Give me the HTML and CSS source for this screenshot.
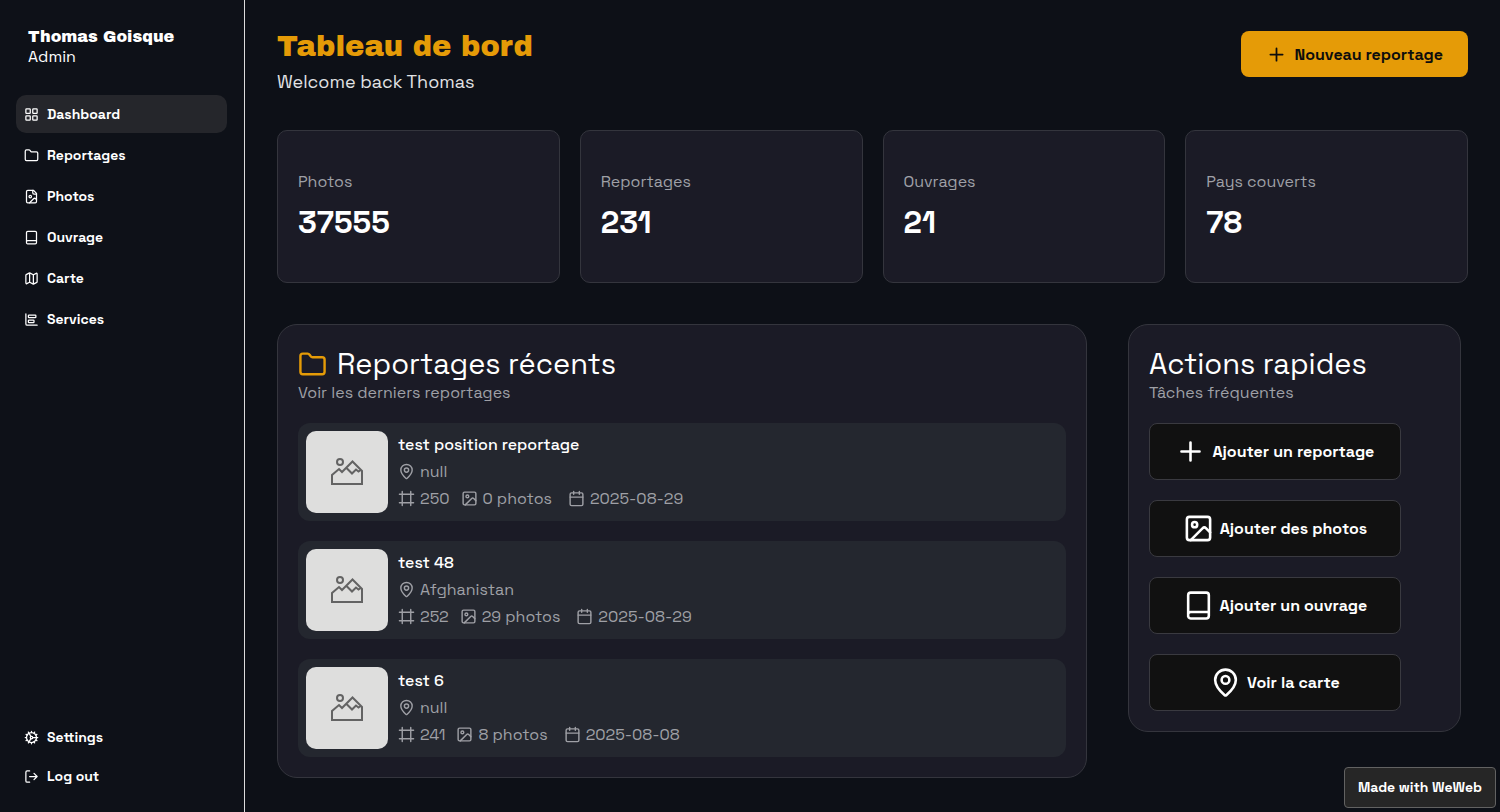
FILE: index.html
```html
<!DOCTYPE html>
<html lang="fr">
<head>
    <meta charset="utf-8">
    <meta name="viewport" content="width=device-width, initial-scale=1">
    <title>Tableau de bord</title>
    <link rel="stylesheet" href="styles.css">
</head>
<body>

  <!-- shared icons -->
  <svg class="sprite" aria-hidden="true">
    <symbol id="i-grid" viewBox="0 0 24 24"><rect x="3" y="3" width="7" height="7" rx="1"/><rect x="14" y="3" width="7" height="7" rx="1"/><rect x="14" y="14" width="7" height="7" rx="1"/><rect x="3" y="14" width="7" height="7" rx="1"/></symbol>
    <symbol id="i-folder" viewBox="0 0 24 24"><path d="M20 20a2 2 0 0 0 2-2V8a2 2 0 0 0-2-2h-7.900a2 2 0 0 1-1.690-.9L9.600 3.900A2 2 0 0 0 7.930 3H4a2 2 0 0 0-2 2v13a2 2 0 0 0 2 2Z"/></symbol>
    <symbol id="i-file" viewBox="0 0 24 24"><path d="M15 2H6a2 2 0 0 0-2 2v16a2 2 0 0 0 2 2h12a2 2 0 0 0 2-2V7Z"/><path d="M14 2v4a2 2 0 0 0 2 2h4"/><circle cx="10" cy="12" r="2"/><path d="m20 17-1.300-1.300a2.410 2.410 0 0 0-3.400 0L9 22"/></symbol>
    <symbol id="i-book" viewBox="0 0 24 24"><path d="M4 19V4a2 2 0 0 1 2-2h12a2 2 0 0 1 2 2v16a2 2 0 0 1-2 2H6a2 2 0 0 1-2-2.500A2 2 0 0 1 6 17h14"/></symbol>
    <symbol id="i-map" viewBox="0 0 24 24"><path d="M14.100 5.550a2 2 0 0 0 1.800 0l3.650-1.830A1 1 0 0 1 21 4.620v12.760a1 1 0 0 1-.55.9l-4.550 2.270a2 2 0 0 1-1.800 0l-4.200-2.100a2 2 0 0 0-1.800 0l-3.650 1.830A1 1 0 0 1 3 19.380V6.620a1 1 0 0 1 .55-.9l4.550-2.270a2 2 0 0 1 1.800 0z"/><path d="M15 5.760v15M9 3.240v15"/></symbol>
    <symbol id="i-chart" viewBox="0 0 24 24"><path d="M3 3v16a2 2 0 0 0 2 2h16"/><rect x="7" y="13" width="9" height="4" rx="1"/><rect x="7" y="5" width="12" height="4" rx="1"/></symbol>
    <symbol id="i-cog" viewBox="0 0 24 24"><circle cx="12" cy="12" r="8"/><circle cx="12" cy="12" r="2"/><path d="M12 2v2M12 22v-2M17 20.660l-1-1.730M11 10.270 7 3.340M20.660 17l-1.730-1M3.340 7l1.730 1M14 12h8M2 12h2M20.660 7l-1.730 1M3.340 17l1.730-1M17 3.340l-1 1.730M11 13.730l-4 6.930"/></symbol>
    <symbol id="i-logout" viewBox="0 0 24 24"><path d="M9 21H5a2 2 0 0 1-2-2V5a2 2 0 0 1 2-2h4M16 17l5-5-5-5M21 12H9"/></symbol>
    <symbol id="i-plus" viewBox="0 0 24 24"><path d="M5 12h14M12 5v14"/></symbol>
    <symbol id="i-pin" viewBox="0 0 24 24"><path d="M20 10c0 5-5.540 10.190-7.400 11.800a1 1 0 0 1-1.200 0C9.540 20.190 4 15 4 10a8 8 0 0 1 16 0"/><circle cx="12" cy="10" r="3"/></symbol>
    <symbol id="i-frame" viewBox="0 0 24 24"><path d="M22 6H2M22 18H2M6 2v20M18 2v20"/></symbol>
    <symbol id="i-image" viewBox="0 0 24 24"><rect x="3" y="3" width="18" height="18" rx="2"/><circle cx="9" cy="9" r="2"/><path d="m21 15-3.090-3.090a2 2 0 0 0-2.820 0L6 21"/></symbol>
    <symbol id="i-calendar" viewBox="0 0 24 24"><path d="M8 2v4M16 2v4M3 10h18"/><rect x="3" y="4" width="18" height="18" rx="2"/></symbol>
    <symbol id="i-mountain" viewBox="0 0 34 28"><circle cx="10" cy="4" r="3"/><path d="M2 26V17l7-6 3 3L22.500 3.500 32 13v13ZM16 9.500l6 6 4-4 2.500 2 3-2"/></symbol>
  </svg>

  <div class="layout">
    <aside class="sidebar">
      <div class="user">
        <strong>Thomas Goisque</strong>
        <span>Admin</span>
      </div>
      <nav class="menu">
        <a class="active" href="#"><svg><use href="#i-grid"/></svg>Dashboard</a>
        <a href="#"><svg><use href="#i-folder"/></svg>Reportages</a>
        <a href="#"><svg><use href="#i-file"/></svg>Photos</a>
        <a href="#"><svg><use href="#i-book"/></svg>Ouvrage</a>
        <a href="#"><svg><use href="#i-map"/></svg>Carte</a>
        <a href="#"><svg><use href="#i-chart"/></svg>Services</a>
      </nav>
      <nav class="menu menu-bottom">
        <a href="#"><svg><use href="#i-cog"/></svg>Settings</a>
        <a href="#"><svg><use href="#i-logout"/></svg>Log out</a>
      </nav>
    </aside>

    <main>
      <header class="page-header">
        <div>
          <h1>Tableau de bord</h1>
          <p>Welcome back Thomas</p>
        </div>
        <button class="btn-new" type="button"><svg><use href="#i-plus"/></svg>Nouveau reportage</button>
      </header>

      <section class="stats">
        <div class="stat"><p>Photos</p><strong>37555</strong></div>
        <div class="stat"><p>Reportages</p><strong>231</strong></div>
        <div class="stat"><p>Ouvrages</p><strong>21</strong></div>
        <div class="stat"><p>Pays couverts</p><strong>78</strong></div>
      </section>

      <div class="panels">
        <section class="panel recent">
          <h2><svg><use href="#i-folder"/></svg>Reportages récents</h2>
          <p class="sub">Voir les derniers reportages</p>
          <div class="list">
            <article class="report">
              <div class="thumb"><svg><use href="#i-mountain"/></svg></div>
              <div class="info">
                <h3>test position reportage</h3>
                <p><span><svg><use href="#i-pin"/></svg>null</span></p>
                <p><span><svg><use href="#i-frame"/></svg>250</span><span><svg><use href="#i-image"/></svg>0 photos</span><span class="date"><svg><use href="#i-calendar"/></svg>2025-08-29</span></p>
              </div>
            </article>
            <article class="report">
              <div class="thumb"><svg><use href="#i-mountain"/></svg></div>
              <div class="info">
                <h3>test 48</h3>
                <p><span><svg><use href="#i-pin"/></svg>Afghanistan</span></p>
                <p><span><svg><use href="#i-frame"/></svg>252</span><span><svg><use href="#i-image"/></svg>29 photos</span><span class="date"><svg><use href="#i-calendar"/></svg>2025-08-29</span></p>
              </div>
            </article>
            <article class="report">
              <div class="thumb"><svg><use href="#i-mountain"/></svg></div>
              <div class="info">
                <h3>test 6</h3>
                <p><span><svg><use href="#i-pin"/></svg>null</span></p>
                <p><span><svg><use href="#i-frame"/></svg>241</span><span><svg><use href="#i-image"/></svg>8 photos</span><span class="date"><svg><use href="#i-calendar"/></svg>2025-08-08</span></p>
              </div>
            </article>
          </div>
        </section>

        <section class="panel actions">
          <h2>Actions rapides</h2>
          <p class="sub">Tâches fréquentes</p>
          <div class="list">
            <button type="button"><svg><use href="#i-plus"/></svg>Ajouter un reportage</button>
            <button type="button"><svg><use href="#i-image"/></svg>Ajouter des photos</button>
            <button type="button"><svg><use href="#i-book"/></svg>Ajouter un ouvrage</button>
            <button type="button"><svg><use href="#i-pin"/></svg>Voir la carte</button>
          </div>
        </section>
      </div>
    </main>
  </div>

  <a class="badge" href="#">Made with WeWeb</a>

</body>
</html>
```
FILE: styles.css
```css
* {
    margin: 0;
    padding: 0;
    box-sizing: border-box;
}

body {
    font-family: "Space Grotesk", Inter, "Liberation Sans", sans-serif;
    font-size: 16px;
    color: #fff;
    background-color: #0d1017;
}

a {
    color: inherit;
    text-decoration: none;
}

button {
    font-family: inherit;
    cursor: pointer;
}

svg {
    flex: none;
    width: 17px;
    height: 17px;
    fill: none;
    stroke: currentColor;
    stroke-width: 2;
    stroke-linecap: round;
    stroke-linejoin: round;
}

.sprite {
    display: none;
}

.layout {
    display: flex;
    min-height: 100vh;
}

/* Sidebar */
.sidebar {
    display: flex;
    flex-direction: column;
    flex: none;
    width: 245px;
    padding: 27px 17px 17px 16px;
    background-color: #0e1118;
    border-right: 1px solid #dcdcdc;
}

.user {
    display: flex;
    flex-direction: column;
    padding-left: 12px;
    margin-bottom: 28px;
    line-height: 20px;
}

.user strong {
    font-family: "Archivo Black", Inter, sans-serif;
    font-weight: 400;
}

.menu {
    display: flex;
    flex-direction: column;
    gap: 3px;
}

.menu a {
    display: flex;
    align-items: center;
    gap: 8px;
    height: 38px;
    padding: 0 8px;
    border-radius: 10px;
    font-size: 14px;
    font-weight: 600;
}

.menu svg {
    width: 15px;
    height: 15px;
}

.menu .active {
    background-color: #25262b;
}

.menu-bottom {
    gap: 1px;
    margin-top: auto;
}

/* Main area */
main {
    flex: 1;
    min-width: 0;
    padding: 31px 32px;
}

.page-header {
    display: flex;
    justify-content: space-between;
    align-items: flex-start;
    margin-bottom: 33px;
}

h1 {
    font-family: "Archivo Black", Inter, sans-serif;
    font-size: 29px;
    font-weight: 400;
    line-height: 32px;
    color: #e59b07;
}

.page-header p {
    margin-top: 4px;
    font-size: 18px;
    line-height: 30px;
    color: #e2e3e5;
}

.btn-new {
    display: flex;
    align-items: center;
    gap: 7px;
    height: 46px;
    padding: 0 25px;
    border: none;
    border-radius: 8px;
    font-size: 16px;
    font-weight: 600;
    color: #0d0d0d;
    background-color: #e59b07;
}

.btn-new svg {
    width: 21px;
    height: 21px;
}

.stats {
    display: grid;
    grid-template-columns: repeat(4, 1fr);
    gap: 20px;
    margin-bottom: 41px;
}

.stat {
    padding: 40px 20px;
    border: 1px solid #34353d;
    border-radius: 10px;
    background-color: #1b1b26;
}

.stat p {
    font-size: 16px;
    line-height: 22px;
    color: #9fa0a6;
}

.stat strong {
    display: block;
    margin-top: 9px;
    font-size: 31px;
    line-height: 40px;
}

/* Panels */
.panels {
    display: flex;
    align-items: flex-start;
    gap: 41px;
}

.panel {
    padding: 20px;
    border: 1px solid #34353d;
    border-radius: 20px;
    background-color: #1b1b26;
}

.recent {
    width: 68%;
}

.actions {
    width: 28%;
}

h2 {
    display: flex;
    align-items: center;
    gap: 10px;
    font-size: 29px;
    font-weight: 400;
    line-height: 38px;
}

h2 svg {
    width: 29px;
    height: 29px;
    color: #e59b07;
}

.sub {
    font-size: 16px;
    line-height: 20px;
    color: #9fa0a6;
}

.list {
    display: flex;
    flex-direction: column;
    align-items: flex-start;
    gap: 20px;
    margin-top: 20px;
}

.report {
    display: flex;
    gap: 10px;
    width: 100%;
    padding: 8px;
    border-radius: 12px;
    background-color: #24272f;
}

.thumb {
    display: flex;
    justify-content: center;
    align-items: center;
    width: 82px;
    height: 82px;
    border-radius: 10px;
    color: #636363;
    background-color: #dededd;
}

.thumb svg {
    width: 34px;
    height: 28px;
    stroke-linecap: butt;
    stroke-linejoin: miter;
}

.info {
    line-height: 27px;
}

.info h3 {
    font-size: 16px;
    font-weight: 500;
}

.info p {
    display: flex;
    gap: 11px;
    color: #9fa0a6;
}

.info span {
    display: flex;
    align-items: center;
    gap: 5px;
}

.info .date {
    margin-left: 5px;
}

.actions button {
    display: flex;
    justify-content: center;
    align-items: center;
    gap: 6px;
    width: 252px;
    height: 57px;
    border: 1px solid #3a3a40;
    border-radius: 8px;
    font-size: 16px;
    font-weight: 600;
    color: #fff;
    background-color: #111;
}

.actions button svg {
    width: 31px;
    height: 31px;
}

.badge {
    position: fixed;
    right: 4px;
    bottom: 4px;
    padding: 10px 13px;
    border: 1px solid #626262;
    border-radius: 4px;
    font-size: 14px;
    font-weight: 600;
    line-height: 19px;
    background-color: #262626;
}
```
